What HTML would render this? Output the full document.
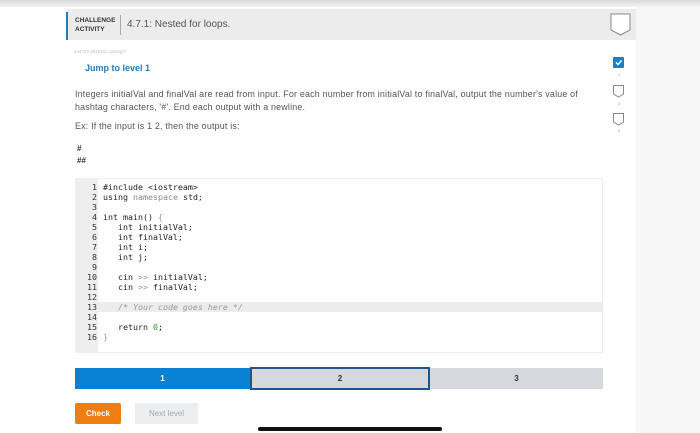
<!DOCTYPE html>
<html><head><style>
*{margin:0;padding:0;box-sizing:border-box}
body{width:700px;height:433px;position:relative;background:#fff;font-family:"Liberation Sans",sans-serif;overflow:hidden}
.a{position:absolute}
.code{font-family:"DejaVu Sans Mono","Liberation Mono",monospace;font-size:8.3px;line-height:10px;white-space:pre;color:#222}
</style></head><body>
<div class="a" style="left:0;top:0;width:700px;height:7px;background:linear-gradient(#d8d8d8,#f4f4f4)"></div>
<div class="a" style="left:636px;top:7px;width:64px;height:426px;background:#f6f6f6"></div>
<div class="a" style="left:66px;top:9px;width:570px;height:31px;background:#ececec"></div>
<div class="a" style="left:66px;top:12px;width:2px;height:28px;background:#2a7bb0"></div>
<div class="a" style="left:75px;top:16px;font-size:6.5px;font-weight:bold;color:#333;line-height:9px">CHALLENGE<br>ACTIVITY</div>
<div class="a" style="left:120px;top:15px;width:1px;height:20px;background:#aaa"></div>
<div class="a" style="left:127px;top:19px;font-size:10px;color:#555">4.7.1: Nested for loops.</div>
<svg class="a" style="left:610px;top:13px" width="22" height="24"><path d="M1 1H20V17L10.5 22L1 17Z" fill="#fff" stroke="#888" stroke-width="1"/></svg>
<div class="a" style="left:74px;top:49px;font-size:4.5px;color:#bbb">444722.2919212.qx3zqy7</div>
<div class="a" style="left:85px;top:63px;font-size:9px;font-weight:bold;color:#2a7bb8">Jump to level 1</div>
<div class="a" style="left:75px;top:88px;font-size:8.9px;color:#555;line-height:13px;width:520px;white-space:nowrap;letter-spacing:0.2px">Integers initialVal and finalVal are read from input. For each number from initialVal to finalVal, output the number's value of<br>hashtag characters, '#'. End each output with a newline.</div>
<div class="a" style="left:75px;top:121px;font-size:8.9px;color:#555;letter-spacing:0.2px">Ex: If the input is 1 2, then the output is:</div>
<div class="a" style="left:77px;top:143px;font-size:8px;font-weight:bold;color:#333;line-height:12px">#<br>##</div>
<svg class="a" style="left:613px;top:57px" width="12" height="12"><rect width="11" height="11" rx="1" fill="#1a7fc8"/><path d="M3 5.5L5 7.5L8.5 3.5" stroke="#fff" stroke-width="1.5" fill="none"/></svg>
<div class="a" style="left:618px;top:72px;font-size:4px;color:#999">1</div>
<svg class="a" style="left:613px;top:85px" width="12" height="13"><path d="M.5 .5H10.5V9L5.5 12L.5 9Z" fill="#fff" stroke="#888"/></svg>
<div class="a" style="left:618px;top:101px;font-size:4px;color:#999">2</div>
<svg class="a" style="left:613px;top:113px" width="12" height="13"><path d="M.5 .5H10.5V9L5.5 12L.5 9Z" fill="#fff" stroke="#888"/></svg>
<div class="a" style="left:618px;top:128px;font-size:4px;color:#999">3</div>
<div class="a" style="left:75px;top:178px;width:528px;height:175px;border:1px solid #eee;background:#fff"></div>
<div class="a" style="left:75px;top:178px;width:23px;height:175px;background:#eee"></div>
<div class="a" style="left:98px;top:302px;width:505px;height:10px;background:#ececec"></div>
<div class="a code" style="left:75px;top:182px;width:22px;text-align:right;color:#333"> 1
 2
 3
 4
 5
 6
 7
 8
 9
10
11
12
13
14
15
16</div>
<div class="a code" style="left:103px;top:182px">#include &lt;iostream&gt;
using <span style="color:#888">namespace</span> std;

int main() <span style="color:#999">{</span>
   int initialVal;
   int finalVal;
   int i;
   int j;

   cin <span style="color:#999">&gt;&gt;</span> initialVal;
   cin <span style="color:#999">&gt;&gt;</span> finalVal;

   <span style="color:#999;font-style:italic">/* Your code goes here */</span>

   return <span style="color:#393">0</span>;
<span style="color:#999">}</span></div>
<div class="a" style="left:75px;top:368px;width:175px;height:21px;background:#0a80d2;color:#fff;font-size:8px;font-weight:bold;text-align:center;line-height:21px">1</div>
<div class="a" style="left:250px;top:367px;width:180px;height:23px;background:#d3d9de;border:2px solid #20558a;color:#333;font-size:8px;font-weight:bold;text-align:center;line-height:19px">2</div>
<div class="a" style="left:430px;top:368px;width:173px;height:21px;background:#d5d9dd;color:#333;font-size:8px;font-weight:bold;text-align:center;line-height:21px">3</div>
<div class="a" style="left:75px;top:403px;width:46px;height:21px;background:#f07d12;color:#fff;font-size:8px;font-weight:bold;text-align:center;line-height:21px;border-radius:2px">Check</div>
<div class="a" style="left:135px;top:403px;width:63px;height:21px;background:#eceef0;color:#aaa;font-size:8px;text-align:center;line-height:21px">Next level</div>
<div class="a" style="left:258px;top:427px;width:184px;height:4px;background:#111;border-radius:2px"></div>
</body></html>
